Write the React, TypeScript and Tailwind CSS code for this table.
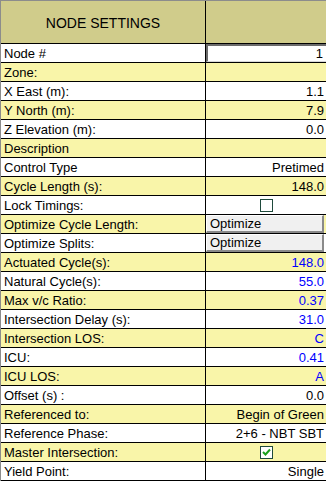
import React from "react";

type Row = {
  label: string;
  value?: string;
  kind?: "text" | "blue" | "input" | "button" | "check" | "checked";
};

const rows: Row[] = [
  { label: "Node #", value: "1", kind: "input" },
  { label: "Zone:" },
  { label: "X East (m):", value: "1.1" },
  { label: "Y North (m):", value: "7.9" },
  { label: "Z Elevation (m):", value: "0.0" },
  { label: "Description" },
  { label: "Control Type", value: "Pretimed" },
  { label: "Cycle Length (s):", value: "148.0" },
  { label: "Lock Timings:", kind: "check" },
  { label: "Optimize Cycle Length:", value: "Optimize", kind: "button" },
  { label: "Optimize Splits:", value: "Optimize", kind: "button" },
  { label: "Actuated Cycle(s):", value: "148.0", kind: "blue" },
  { label: "Natural Cycle(s):", value: "55.0", kind: "blue" },
  { label: "Max v/c Ratio:", value: "0.37", kind: "blue" },
  { label: "Intersection Delay (s):", value: "31.0", kind: "blue" },
  { label: "Intersection LOS:", value: "C", kind: "blue" },
  { label: "ICU:", value: "0.41", kind: "blue" },
  { label: "ICU LOS:", value: "A", kind: "blue" },
  { label: "Offset (s) :", value: "0.0" },
  { label: "Referenced to:", value: "Begin of Green" },
  { label: "Reference Phase:", value: "2+6 - NBT SBT" },
  { label: "Master Intersection:", kind: "checked" },
  { label: "Yield Point:", value: "Single" },
];

const CheckBox = ({ checked }: { checked?: boolean }) => (
  <div className="w-[13px] h-[13px] border border-[#1f4a3c] bg-white flex items-center justify-center">
    {checked && (
      <svg width="9" height="8" viewBox="0 0 9 8">
        <path d="M1 4 L3.5 6.5 L8 1.5" stroke="#1aa01a" strokeWidth="2" fill="none" />
      </svg>
    )}
  </div>
);

const ValueCell = ({ row }: { row: Row }) => {
  switch (row.kind) {
    case "input":
      return (
        <div className="h-full w-full bg-white border-t-2 border-l-2 border-[#6b6b6b] border-b border-b-[#d8d8d8] flex items-center justify-end pr-[3px]">
          {row.value}
        </div>
      );
    case "button":
      return (
        <div className="h-full w-[118px] bg-[#f0f0f0] border-t border-l border-t-white border-l-white border-b-2 border-r-2 border-[#8a8a8a] flex items-center pl-[3px]">
          {row.value}
        </div>
      );
    case "check":
    case "checked":
      return (
        <div className="h-full flex items-center justify-center">
          <CheckBox checked={row.kind === "checked"} />
        </div>
      );
    default:
      return (
        <div
          className={`h-full flex items-center justify-end pr-[2px] ${
            row.kind === "blue" ? "text-[#0000ff]" : "text-black"
          }`}
        >
          {row.value}
        </div>
      );
  }
};

export default function App() {
  return (
    <div
      className="w-[326px] h-[481px] overflow-hidden bg-white border-t border-l border-[#8c8c8c] text-[13px] leading-none text-black"
      style={{ fontFamily: '"Liberation Sans", Arial, sans-serif' }}
    >
      {/* header */}
      <div className="grid grid-cols-[205px_1fr] h-[43px] bg-[#d0cc8b] border-b border-black">
        <div className="flex items-center justify-center border-r border-black pt-[2px] text-[14px] font-normal">
          NODE SETTINGS
        </div>
        <div />
      </div>

      {rows.map((row, i) => (
        <div
          key={row.label}
          className={`grid grid-cols-[205px_1fr] h-[19px] border-b border-black ${
            i % 2 === 1 ? "bg-[#f9f5a9]" : "bg-white"
          }`}
        >
          <div className="flex items-center pl-[3px] border-r border-black whitespace-nowrap">
            {row.label}
          </div>
          <div className="h-[18px]">
            <ValueCell row={row} />
          </div>
        </div>
      ))}
    </div>
  );
}
